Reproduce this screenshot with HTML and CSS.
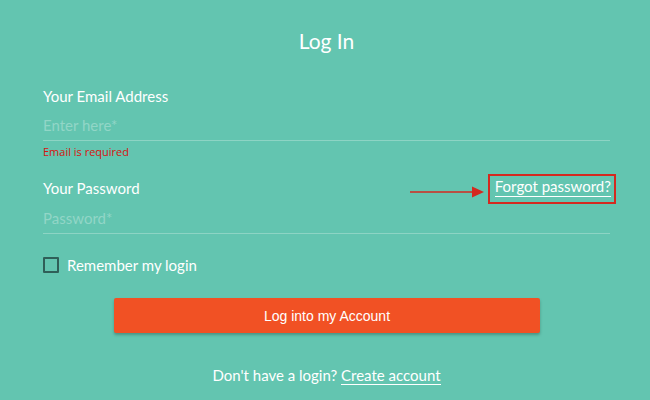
FILE: index.html
```html
<!DOCTYPE html>
<html>
<head>
<meta charset="utf-8">
<link rel="stylesheet" href="styles.css">
</head>
<body>
<div class="page">
  <h1 class="title">Log In</h1>
  <form class="form">
    <div class="field">
      <label class="label">Your Email Address</label>
      <input class="input" type="text" placeholder="Enter here*">
      <div class="error">Email is required</div>
    </div>
    <div class="field field-pw">
      <div class="label-row">
        <label class="label">Your Password</label>
        <div class="forgot-wrap">
          <svg class="arrow" width="80" height="14" viewBox="0 0 80 14">
            <line x1="3" y1="7" x2="67" y2="7" stroke="#d4291f" stroke-width="1.6"/>
            <polygon points="65,1.5 77,7 65,12.5" fill="#d4291f"/>
          </svg>
          <span class="highlight"><a class="forgot" href="#">Forgot password?</a></span>
        </div>
      </div>
      <input class="input" type="password" placeholder="Password*">
    </div>
    <label class="remember">
      <span class="box"></span>
      <span>Remember my login</span>
    </label>
    <div class="btn-row">
      <button class="btn" type="button">Log into my Account</button>
    </div>
    <p class="footer">Don't have a login? <a class="link" href="#">Create account</a></p>
  </form>
</div>
</body>
</html>
```
FILE: styles.css
```css
html, body {
  margin: 0;
  padding: 0;
  background: #63c5b0;
}
.page {
  width: 650px;
  height: 400px;
  box-sizing: border-box;
  padding: 0 40px 0 43px;
  font-family: Lato, "Open Sans", sans-serif;
  color: #fff;
}
.title {
  margin: 0;
  padding-top: 28px;
  height: 26px;
  line-height: 26px;
  font-size: 21px;
  font-weight: normal;
  text-align: center;
}
.form {
  margin: 0;
  padding-top: 33px;
}
.field {
  display: flex;
  flex-direction: column;
}
.label {
  font-size: 15px;
  line-height: 18px;
  height: 18px;
}
.input {
  margin-top: 11px;
  border: none;
  border-bottom: 1px solid #8dd4c4;
  background: transparent;
  padding: 0 0 6px 0;
  height: 18px;
  font-family: Lato, "Open Sans", sans-serif;
  font-size: 15px;
  color: #fff;
  outline: none;
}
.input::placeholder {
  color: #92d6c7;
}
.error {
  color: #d8120e;
  font-size: 11px;
  line-height: 14px;
  margin-top: 4px;
  font-family: "Open Sans", sans-serif;
}
.field-pw {
  margin-top: 20px;
}
.field-pw .input {
  margin-top: 12px;
}
.label-row {
  display: flex;
  justify-content: space-between;
  align-items: center;
  height: 18px;
}
.forgot-wrap {
  display: flex;
  align-items: center;
  margin-right: -6px;
  padding-top: 2px;
}
.arrow {
  margin-right: 1px;
  margin-top: 6px;
  display: block;
}
.highlight {
  display: block;
  border: 2px solid #d4291f;
  padding: 1px 3px 5px 5px;
}
.forgot {
  display: block;
  color: #fff;
  font-size: 15px;
  line-height: 18px;
  text-decoration: none;
  border-bottom: 1px solid #fff;
  padding-bottom: 1px;
}
.remember {
  display: flex;
  align-items: center;
  margin-top: 22px;
  font-size: 15px;
  line-height: 18px;
}
.box {
  width: 12px;
  height: 12px;
  border: 2px solid #2f5f58;
  border-radius: 1px;
  margin-right: 8px;
}
.btn-row {
  display: flex;
  justify-content: center;
  margin-top: 24px;
  padding-left: 1px;
}
.btn {
  width: 426px;
  height: 35px;
  background: #f15124;
  color: #fff;
  border: none;
  border-radius: 2px;
  font-family: "Liberation Sans", Arial, sans-serif;
  font-size: 14px;
  box-shadow: 0 2px 3px rgba(0, 0, 0, 0.25);
}
.footer {
  margin: 33px 0 0 0;
  text-align: center;
  font-size: 15px;
  line-height: 18px;
}
.link {
  color: #fff;
  text-decoration: none;
  border-bottom: 1px solid #fff;
}
```
